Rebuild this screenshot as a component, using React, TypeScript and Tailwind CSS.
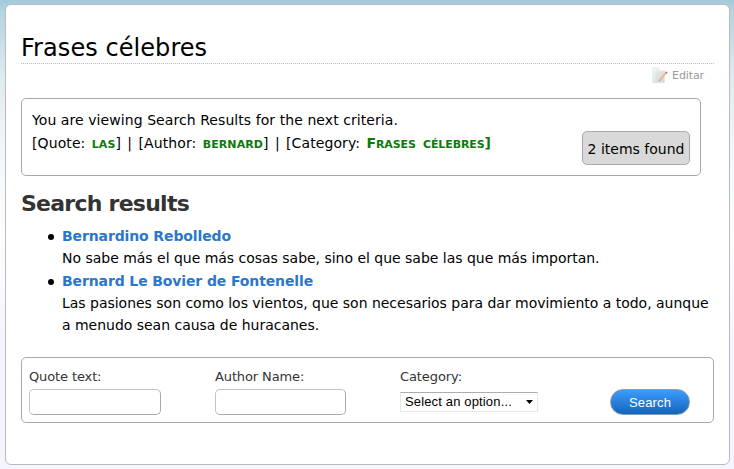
import type { ReactNode } from "react";

const quotes = [
  {
    author: "Bernardino Rebolledo",
    lines: ["No sabe más el que más cosas sabe, sino el que sabe las que más importan."],
  },
  {
    author: "Bernard Le Bovier de Fontenelle",
    lines: [
      "Las pasiones son como los vientos, que son necesarios para dar movimiento a todo, aunque",
      "a menudo sean causa de huracanes.",
    ],
  },
];

function EditIcon() {
  return (
    <svg width="17" height="17" viewBox="0 0 17 17" className="block">
      <defs>
        <linearGradient id="paper" x1="0" y1="0" x2="1" y2="1">
          <stop offset="0" stopColor="#f8fafb" />
          <stop offset="1" stopColor="#c9d3d8" />
        </linearGradient>
      </defs>
      <path d="M0.5 0.8h6.5v3h5.5v12H0.5z" fill="url(#paper)" stroke="#e2e7e9" strokeWidth="0.6" />
      <path d="M3.5 4.5h9v11.3h-9z" fill="#d3dbdf" fillOpacity="0.35" />
      <path d="M7.8 13l6-6.8" stroke="#f2b78a" strokeWidth="2" />
      <path d="M13.8 6.2l1.1-1.2" stroke="#cf6f6a" strokeWidth="2.1" />
      <path d="M6.9 14l0.9-1" stroke="#a09a94" strokeWidth="1.1" />
    </svg>
  );
}

function Term({ children }: { children: ReactNode }) {
  return (
    <strong className="text-[16px] font-bold leading-none text-[#0b7a0b] [font-variant:small-caps]">
      {children}
    </strong>
  );
}

function TextField({ label, inputClass }: { label: string; inputClass: string }) {
  return (
    <label className="flex flex-col">
      <span className="h-[25px] whitespace-nowrap text-[13px] leading-[25px] tracking-[-0.12px] text-[#333]">
        {label}
      </span>
      <input
        className={`h-[26px] rounded-[5px] border border-[#aaa] border-t-[#c4c4c4] border-l-[#c4c4c4] bg-white ${inputClass}`}
      />
    </label>
  );
}

export default function App() {
  return (
    <div className="h-[469px] w-[734px] overflow-hidden bg-[linear-gradient(to_bottom,#a2cad9_0px,#b4d4df_12px,#c3dbe4_35px,#dbe9ef_70px,#e9f1f5_115px,#f5f9fb_170px,#fdfdff_240px,#f8f8ff_300px,#f5f5ff_330px)] pl-[5px] pt-1 font-['DejaVu_Sans',Verdana,sans-serif] text-black">
      <main className="h-[461px] w-[725px] rounded-[6px] border border-[#bbb] bg-white pl-[15px]">
        <header className="w-[693px]">
          <h1 className="h-[59px] whitespace-nowrap border-b border-dotted border-[#bbb] pt-[28px] text-[24px] leading-[31px] tracking-[0.06px]">
            Frases célebres
          </h1>
          <div className="flex h-[34px] justify-end pr-[10px] pt-[3px]">
            <a className="flex h-[17px] gap-[3px] text-[11px] leading-[17px] tracking-[-0.1px] text-[#999]">
              <EditIcon />
              Editar
            </a>
          </div>
        </header>

        <section className="flex h-[78px] w-[680px] justify-between rounded-[5px] border border-[#aaa] px-[10px] pt-[10px] text-[14px] leading-[23px]">
          <div className="whitespace-nowrap">
            <p className="h-[23px] tracking-[0.07px]">You are viewing Search Results for the next criteria.</p>
            <p className="h-[23px] tracking-[0.1px] [word-spacing:1.75px]">
              [Quote: <Term>las</Term>] | [Author: <Term>bernard</Term>] | [Category:{" "}
              <Term>
                <span className="tracking-[-0.1px]">
                  <span className="text-[14px]">F</span>rases célebres<span className="text-[14px]">]</span>
                </span>
              </Term>
            </p>
          </div>
          <div className="mt-[22px] h-[34px] w-[108px] whitespace-nowrap rounded-[5px] border border-[#aaa] bg-[#d9d9d9] text-center leading-[34px]">
            2 items found
          </div>
        </section>

        <h2 className="mt-[12px] h-[37px] text-[22px] font-bold leading-[31px] tracking-[-0.75px] text-[#333]">
          Search results
        </h2>
        <ul className="h-[132px] pl-[27px] text-[14px] leading-[22px]">
          {quotes.map((quote) => (
            <li key={quote.author} className="flex gap-[8px] whitespace-nowrap pb-px">
              <span className="mt-[9px] size-[6px] rounded-full bg-black" />
              <div>
                <a className="block h-[22px] font-bold tracking-[-0.12px] text-[#2a77cc]">{quote.author}</a>
                {quote.lines.map((line) => (
                  <p key={line} className="tracking-[-0.02px]">
                    {line}
                  </p>
                ))}
              </div>
            </li>
          ))}
        </ul>

        <form className="flex h-[66px] w-[693px] rounded-[5px] border border-[#aaa] pl-[7px] pt-[6px]">
          <div className="w-[186px]">
            <TextField label="Quote text:" inputClass="w-[132px]" />
          </div>
          <div className="w-[185px]">
            <TextField label="Author Name:" inputClass="w-[131px]" />
          </div>
          <div className="w-[210px]">
            <div className="h-[28px] text-[13px] leading-[25px] tracking-[-0.1px] text-[#333]">Category:</div>
            <div className="flex h-[20px] w-[138px] items-center justify-between border border-[#e3e9ef] border-t-[#abadb3] bg-white pl-1 pr-1 font-['Liberation_Sans',Arial,sans-serif] text-[13px] tracking-[0.15px]">
              <span className="whitespace-nowrap">Select an option...</span>
              <svg width="7" height="4" viewBox="0 0 7 4">
                <path d="M0 0h7L3.5 4z" fill="#000" />
              </svg>
            </div>
          </div>
          <button
            type="button"
            className="mt-[25px] h-[26px] w-[80px] rounded-[13px] border border-[#8c9cac] bg-linear-to-b from-[#3e9cff] to-[#1265b9] pt-px font-['Liberation_Sans',Arial,sans-serif] text-[13px] leading-[23px] tracking-[0.15px] text-white"
          >
            Search
          </button>
        </form>
      </main>
    </div>
  );
}
